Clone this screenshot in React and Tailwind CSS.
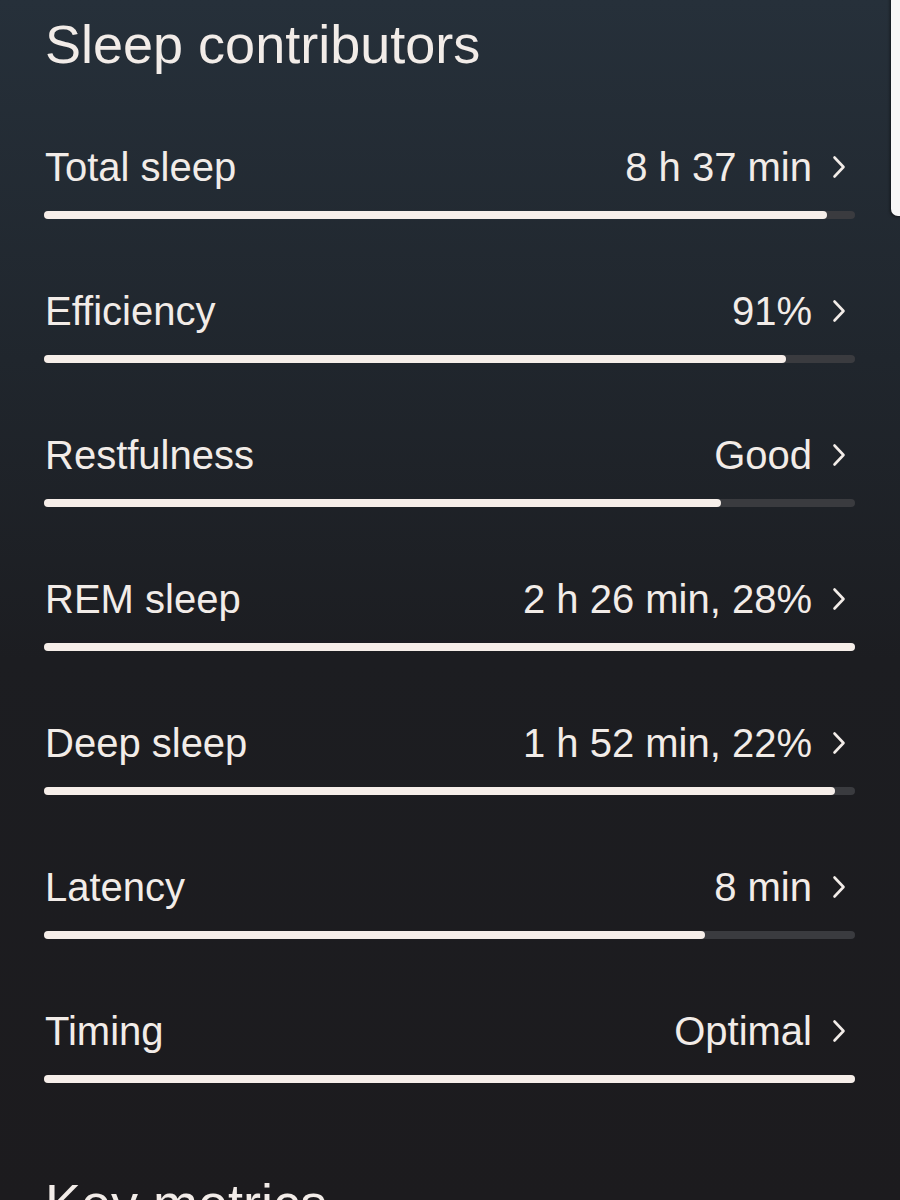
import React from "react";

const rows = [
  { label: "Total sleep", value: "8 h 37 min", pct: 96.5 },
  { label: "Efficiency", value: "91%", pct: 91.5 },
  { label: "Restfulness", value: "Good", pct: 83.5 },
  { label: "REM sleep", value: "2 h 26 min, 28%", pct: 100 },
  { label: "Deep sleep", value: "1 h 52 min, 22%", pct: 97.5 },
  { label: "Latency", value: "8 min", pct: 81.5 },
  { label: "Timing", value: "Optimal", pct: 100 },
];

function Chevron() {
  return (
    <svg width="14" height="24" viewBox="0 0 14 24" className="ml-[20px] mr-[10px] shrink-0">
      <path d="M2.5 2.5 L11.5 12 L2.5 21.5" fill="none" stroke="#f2ece8" strokeWidth="2.6" strokeLinecap="round" strokeLinejoin="round" />
    </svg>
  );
}

export default function App() {
  return (
    <div
      className="relative w-[900px] h-[1200px] overflow-hidden bg-[linear-gradient(180deg,#26303a_0%,#20262d_30%,#1c1d21_55%,#1c1b1e_100%)] text-[#f2ece8]"
      style={{ fontFamily: '"Liberation Sans", Arial, sans-serif' }}
    >
      <div className="absolute right-0 top-[-10px] w-[9px] h-[226px] rounded-bl-[7px] bg-[#f7f7f7] shadow-[-1px_1px_3px_rgba(0,0,0,0.5)]" />
      <div className="pl-[45px] pr-[44px] pt-[17px]">
        <h1 className="text-[54px] leading-[54px] font-normal">Sleep contributors</h1>
        <div className="mt-[76px] flex flex-col gap-[72px]">
          {rows.map((r) => (
            <div key={r.label}>
              <div className="flex items-center justify-between h-[40px] text-[40px] leading-[40px]">
                <span>{r.label}</span>
                <div className="flex items-center">
                  <span>{r.value}</span>
                  <Chevron />
                </div>
              </div>
              <div className="mt-[24px] h-[8px] w-full rounded-full bg-[#3a3b3f] -ml-px">
                <div className="h-full rounded-full bg-[#f6eee9]" style={{ width: `${r.pct}%` }} />
              </div>
            </div>
          ))}
        </div>
        <h2 className="mt-[93px] text-[54px] leading-[54px] font-normal">Key metrics</h2>
      </div>
    </div>
  );
}
